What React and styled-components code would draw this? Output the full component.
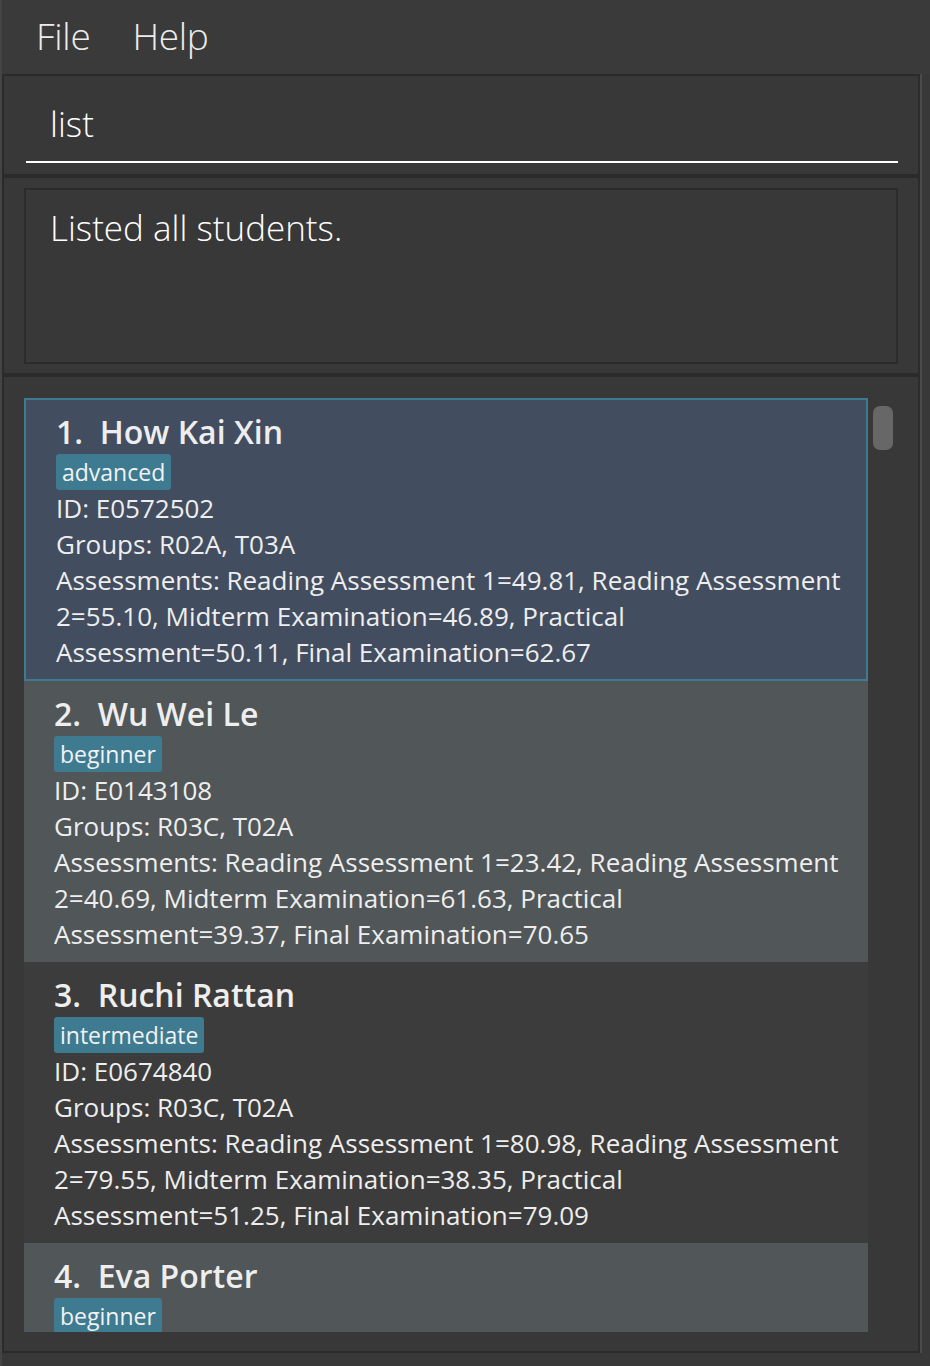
import React from "react";
import styled, { createGlobalStyle } from "styled-components";

const Global = createGlobalStyle`
  html, body { margin: 0; padding: 0; background: #3a3a3a; }
  body { font-family: "Open Sans", "Noto Sans", sans-serif; color: #ffffff; }
  * { box-sizing: border-box; }
`;

const Window = styled.div`
  width: 930px;
  height: 1366px;
  display: flex;
  flex-direction: column;
  background: #444444;
  overflow: hidden;
`;

const MenuBar = styled.div`
  height: 74px;
  flex: none;
  display: flex;
  align-items: center;
  gap: 42px;
  padding: 0 0 4px 34px;
  background: #3a3a3a;
  border-left: 2px solid #444444;
`;

const MenuItem = styled.span`
  font-family: "Open Sans", sans-serif;
  font-weight: 300;
  font-size: 37px;
  color: #ececec;
  letter-spacing: -0.3px;
`;

const Body = styled.div`
  flex: 1;
  min-height: 0;
  display: flex;
  padding-left: 2px;
  padding-right: 8px;
  background: linear-gradient(to right, #444444 0 2px, #383838 2px);
`;

const Frame = styled.div`
  width: 920px;
  min-height: 0;
  display: flex;
  flex-direction: column;
  border-right: 2px solid #4a4a4a;
  margin-bottom: 13px;
`;

const Main = styled.div`
  flex: 1;
  min-height: 0;
  display: flex;
  flex-direction: column;
  border: 2px solid #2b2b2b;
  background: #383838;
  overflow: hidden;
`;

const CommandSection = styled.div`
  height: 102px;
  flex: none;
  padding: 0 20px 0 22px;
  display: flex;
  flex-direction: column;
  justify-content: flex-end;
  border-bottom: 4px solid #2b2b2b;
`;

const CommandInput = styled.div`
  height: 87px;
  padding: 26px 0 0 24px;
  border-bottom: 2px solid #ffffff;
  margin-bottom: 11px;
  font-weight: 300;
  font-size: 35px;
  line-height: 44px;
  color: #ffffff;
`;

const ResultSection = styled.div`
  height: 199px;
  flex: none;
  padding: 10px 20px 9px 20px;
  border-bottom: 4px solid #2b2b2b;
  display: flex;
`;

const ResultBox = styled.div`
  flex: 1;
  border: 2px solid #2b2b2b;
  padding: 14px 0 0 24px;
  font-weight: 300;
  font-size: 35px;
  line-height: 48px;
  color: #ffffff;
`;

const ListSection = styled.div`
  flex: 1;
  min-height: 0;
  display: flex;
  padding: 21px 20px 19px 20px;
`;

const ListView = styled.div`
  width: 844px;
  flex: none;
  overflow: hidden;
  display: flex;
  flex-direction: column;
`;

const ScrollTrack = styled.div`
  flex: 1;
  display: flex;
  justify-content: center;
  padding-top: 8px;
`;

const ScrollThumb = styled.div`
  width: 20px;
  height: 44px;
  border-radius: 7px;
  background: #676767;
`;

const Card = styled.div`
  flex: none;
  background: ${(p) => (p.$selected ? "#424d5f" : p.$odd ? "#515658" : "#3c3c3c")};
  border: ${(p) => (p.$selected ? "2px solid #3e7b91" : "none")};
  padding: ${(p) => (p.$selected ? "12px 0 9px 30px" : "13px 0 10px 30px")};
`;

const Content = styled.div`
  width: 794px;
`;

const Name = styled.div`
  font-weight: 600;
  font-size: 32px;
  line-height: 40px;
  color: #eeeeee;
  white-space: pre;
  margin-bottom: 2px;
`;

const Tags = styled.div`
  display: flex;
  gap: 6px;
  height: 36px;
`;

const Tag = styled.span`
  background: #3e7b91;
  color: #f2f2f2;
  border-radius: 3px;
  padding: 0 6px;
  font-size: 23px;
  font-weight: 500;
  line-height: 36px;
`;

const Line = styled.div`
  font-size: 26px;
  line-height: 36px;
  color: #eeeeee;
`;

const students = [
  {
    name: "How Kai Xin",
    tag: "advanced",
    id: "E0572502",
    groups: "R02A, T03A",
    a: ["49.81", "55.10", "46.89", "50.11", "62.67"],
  },
  {
    name: "Wu Wei Le",
    tag: "beginner",
    id: "E0143108",
    groups: "R03C, T02A",
    a: ["23.42", "40.69", "61.63", "39.37", "70.65"],
  },
  {
    name: "Ruchi Rattan",
    tag: "intermediate",
    id: "E0674840",
    groups: "R03C, T02A",
    a: ["80.98", "79.55", "38.35", "51.25", "79.09"],
  },
  {
    name: "Eva Porter",
    tag: "beginner",
    id: "E0000000",
    groups: "R01A, T01A",
    a: ["50.00", "50.00", "50.00", "50.00", "50.00"],
  },
];

function StudentCard({ s, index }) {
  return (
    <Card $selected={index === 0} $odd={index % 2 === 1}>
      <Content>
        <Name>{`${index + 1}.  ${s.name}`}</Name>
        <Tags>
          <Tag>{s.tag}</Tag>
        </Tags>
        <Line>ID: {s.id}</Line>
        <Line>Groups: {s.groups}</Line>
        <Line>
          Assessments: Reading Assessment 1={s.a[0]}, Reading Assessment 2={s.a[1]}, Midterm
          Examination={s.a[2]}, Practical Assessment={s.a[3]}, Final Examination={s.a[4]}
        </Line>
      </Content>
    </Card>
  );
}

export default function App() {
  return (
    <>
      <Global />
      <Window>
        <MenuBar>
          <MenuItem>File</MenuItem>
          <MenuItem>Help</MenuItem>
        </MenuBar>
        <Body>
          <Frame>
            <Main>
              <CommandSection>
                <CommandInput>list</CommandInput>
              </CommandSection>
              <ResultSection>
                <ResultBox>Listed all students.</ResultBox>
              </ResultSection>
              <ListSection>
                <ListView>
                  {students.map((s, i) => (
                    <StudentCard key={i} s={s} index={i} />
                  ))}
                </ListView>
                <ScrollTrack>
                  <ScrollThumb />
                </ScrollTrack>
              </ListSection>
            </Main>
          </Frame>
        </Body>
      </Window>
    </>
  );
}
